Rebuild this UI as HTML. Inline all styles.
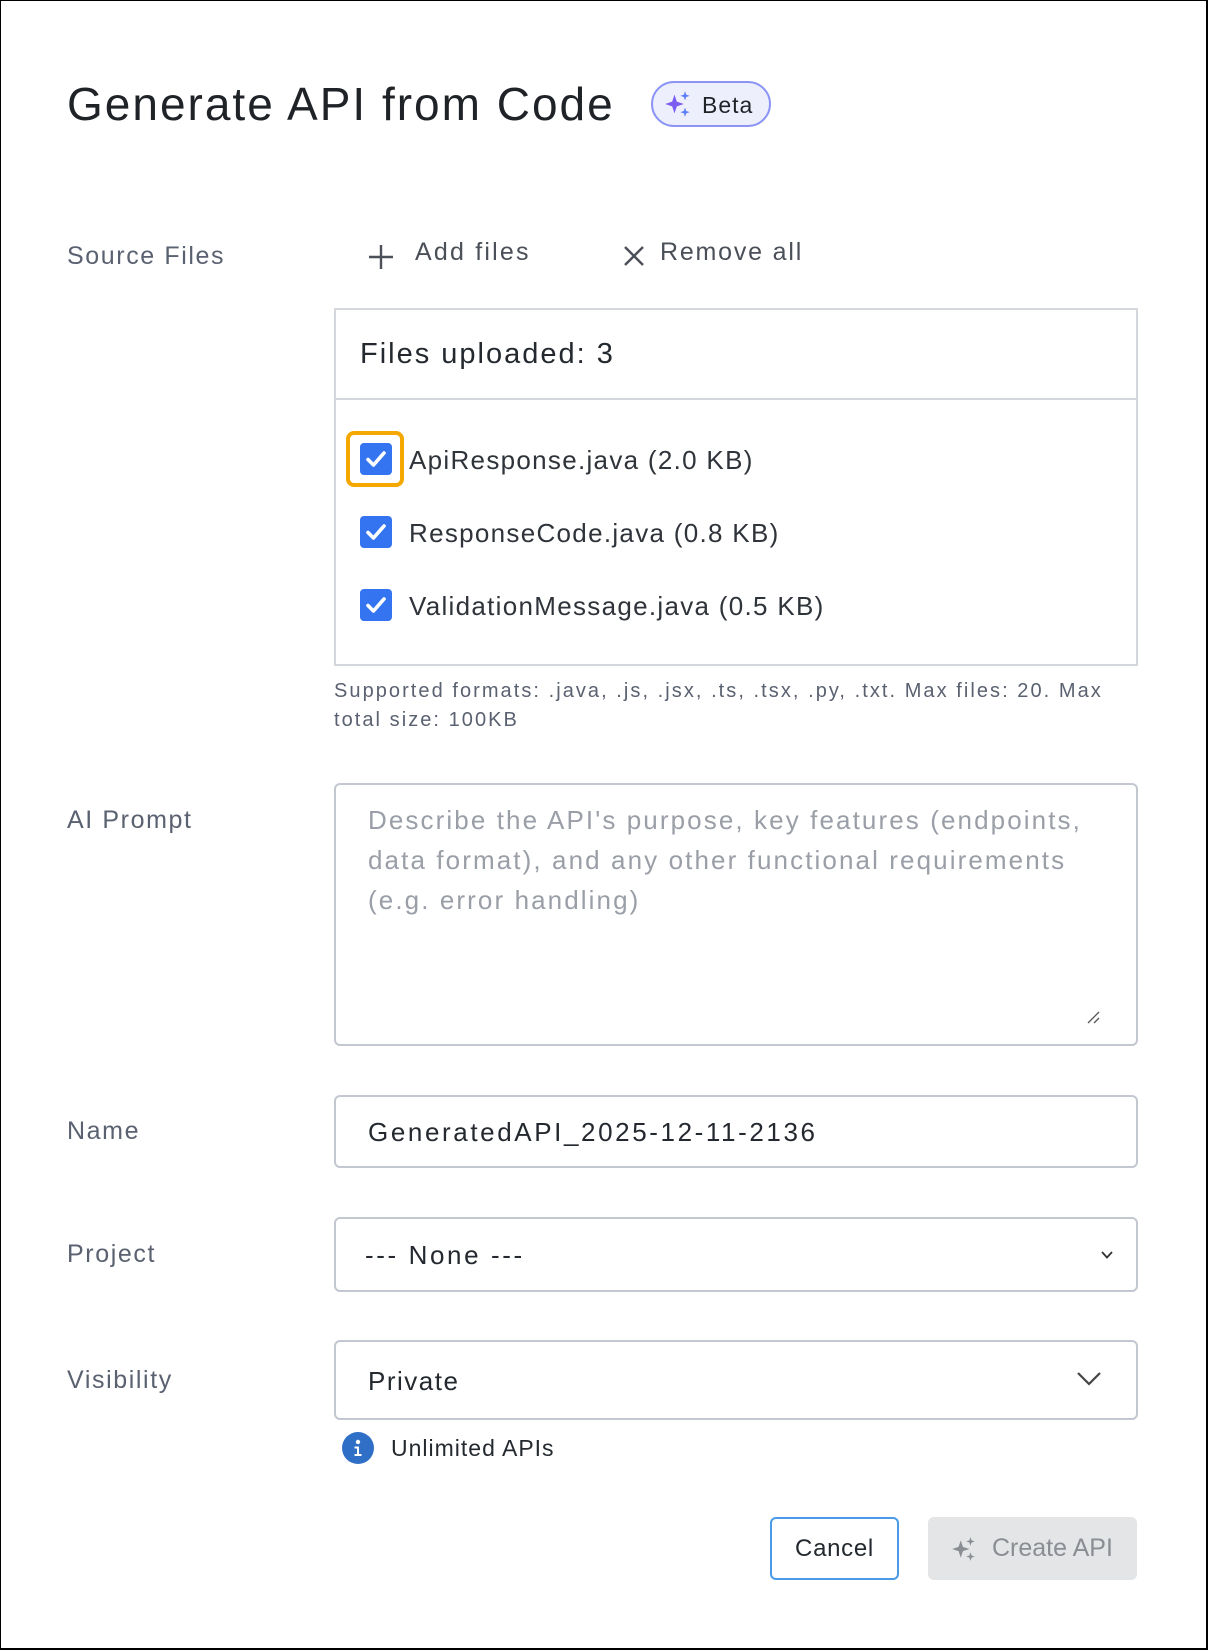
<!DOCTYPE html>
<html><head><meta charset="utf-8"><style>
*{box-sizing:border-box;margin:0;padding:0}
html,body{width:1208px;height:1650px;background:#fff;overflow:hidden}
body{font-family:"Liberation Sans",Arial,sans-serif;color:#24292f;position:relative}
.frame{position:absolute;left:0;top:0;width:1208px;height:1650px;border:1px solid #000;border-bottom:2px solid #000;border-right:2px solid #000}
.a{position:absolute;white-space:nowrap}
.lbl{font-size:25px;color:#5a6170;letter-spacing:1.6px}
.box{position:absolute;border:2px solid #c3c7d0;border-radius:6px;background:#fff}
.cb{position:absolute;width:32px;height:32px;background:#3574f0;border-radius:4px}
.ft{font-size:26px;color:#2f333a;letter-spacing:1.3px}
</style></head><body>
<div class="frame"></div>

<div class="a" style="left:67px;top:77px;font-size:46px;letter-spacing:2px;color:#1f2328">Generate API from Code</div>
<div class="a" style="left:651px;top:81px;width:120px;height:46px;border:2px solid #8c95f5;border-radius:23px;background:#eeeffd;"></div>
<svg class="a" style="left:664px;top:90px" width="28" height="28" viewBox="0 0 24 24"><path d="M9 4 L11 10 L17 12 L11 14 L9 20 L7 14 L1 12 L7 10Z" fill="#7b5cf0"/><path d="M18 1 L19 4 L22 5 L19 6 L18 9 L17 6 L14 5 L17 4Z" fill="#5b7df5"/><path d="M18 15 L19 18 L22 19 L19 20 L18 23 L17 20 L14 19 L17 18Z" fill="#5b7df5"/></svg>
<div class="a" style="left:702px;top:92px;font-size:23px;letter-spacing:1px;color:#1f2328">Beta</div>

<div class="a lbl" style="left:67px;top:242px">Source Files</div>
<svg class="a" style="left:367px;top:243px" width="28" height="28" viewBox="0 0 28 28"><path d="M14 2V26M2 14H26" stroke="#4a4f58" stroke-width="2.4"/></svg>
<div class="a" style="left:415px;top:238px;font-size:25px;letter-spacing:2.2px;color:#4a4f58">Add files</div>
<svg class="a" style="left:623px;top:245px" width="22" height="22" viewBox="0 0 22 22"><path d="M2 2L20 20M20 2L2 20" stroke="#4a4f58" stroke-width="2.4"/></svg>
<div class="a" style="left:660px;top:238px;font-size:25px;letter-spacing:1.8px;color:#4a4f58">Remove all</div>

<div class="a" style="left:334px;top:308px;width:804px;height:358px;border:2px solid #d4d7dc"></div>
<div class="a" style="left:334px;top:398px;width:804px;height:2px;background:#d4d7dc"></div>
<div class="a" style="left:360px;top:338px;font-size:29px;letter-spacing:2px;color:#24292f">Files uploaded: 3</div>

<div class="a" style="left:346px;top:431px;width:58px;height:56px;border:4px solid #f5a800;border-radius:8px"></div>
<div class="cb" style="left:360px;top:443px"></div>
<div class="cb" style="left:360px;top:516px"></div>
<div class="cb" style="left:360px;top:589px"></div>
<svg class="a" style="left:360px;top:443px" width="32" height="32" viewBox="0 0 32 32"><path d="M8 16.5L13.5 22L24 10" stroke="#fff" stroke-width="3.6" fill="none" stroke-linecap="round" stroke-linejoin="round"/></svg>
<svg class="a" style="left:360px;top:516px" width="32" height="32" viewBox="0 0 32 32"><path d="M8 16.5L13.5 22L24 10" stroke="#fff" stroke-width="3.6" fill="none" stroke-linecap="round" stroke-linejoin="round"/></svg>
<svg class="a" style="left:360px;top:589px" width="32" height="32" viewBox="0 0 32 32"><path d="M8 16.5L13.5 22L24 10" stroke="#fff" stroke-width="3.6" fill="none" stroke-linecap="round" stroke-linejoin="round"/></svg>
<div class="a ft" style="left:409px;top:445px">ApiResponse.java (2.0 KB)</div>
<div class="a ft" style="left:409px;top:518px">ResponseCode.java (0.8 KB)</div>
<div class="a ft" style="left:409px;top:591px">ValidationMessage.java (0.5 KB)</div>

<div class="a" style="left:334px;top:677px;font-size:20px;letter-spacing:2.05px;line-height:29px;color:#5a6170">Supported formats: .java, .js, .jsx, .ts, .tsx, .py, .txt. Max files: 20. Max<br>total size: 100KB</div>

<div class="a lbl" style="left:67px;top:806px">AI Prompt</div>
<div class="box" style="left:334px;top:783px;width:804px;height:263px"></div>
<div class="a" style="left:368px;top:800px;font-size:26px;letter-spacing:2.1px;line-height:40px;color:#9a9ea6">Describe the API's purpose, key features (endpoints,<br>data format), and any other functional requirements<br>(e.g. error handling)</div>
<svg class="a" style="left:1086px;top:1010px" width="14" height="14" viewBox="0 0 14 14"><path d="M2 13L13 2M8 13L13 8" stroke="#555" stroke-width="1.3"/></svg>

<div class="a lbl" style="left:67px;top:1117px">Name</div>
<div class="box" style="left:334px;top:1095px;width:804px;height:73px"></div>
<div class="a" style="left:368px;top:1117px;font-size:26px;letter-spacing:2.6px;color:#24292f">GeneratedAPI_2025-12-11-2136</div>

<div class="a lbl" style="left:67px;top:1240px">Project</div>
<div class="box" style="left:334px;top:1217px;width:804px;height:75px"></div>
<div class="a" style="left:365px;top:1240px;font-size:26px;letter-spacing:2.6px;color:#24292f">--- None ---</div>
<svg class="a" style="left:1099px;top:1249px" width="16" height="12" viewBox="0 0 16 12"><path d="M3 3L8 8.5L13 3" stroke="#333" stroke-width="1.8" fill="none"/></svg>

<div class="a lbl" style="left:67px;top:1366px">Visibility</div>
<div class="box" style="left:334px;top:1340px;width:804px;height:80px"></div>
<div class="a" style="left:368px;top:1366px;font-size:26px;letter-spacing:1.5px;color:#24292f">Private</div>
<svg class="a" style="left:1076px;top:1370px" width="26" height="18" viewBox="0 0 26 18"><path d="M2 3L13 14L24 3" stroke="#444" stroke-width="2.2" fill="none"/></svg>

<svg class="a" style="left:342px;top:1432px" width="32" height="32" viewBox="0 0 32 32"><circle cx="16" cy="16" r="16" fill="#2f6fc6"/><circle cx="16" cy="10" r="2.2" fill="#fff"/><path d="M12.5 14.5H17V22H19.5V24H12.5V22H15V16.5H12.5Z" fill="#fff"/></svg>
<div class="a" style="left:391px;top:1435px;font-size:23px;letter-spacing:1px;color:#24292f">Unlimited APIs</div>

<div class="a" style="left:770px;top:1517px;width:129px;height:63px;border:2px solid #4a9ae8;border-radius:6px"></div>
<div class="a" style="left:770px;top:1535px;width:129px;text-align:center;font-size:24px;letter-spacing:0.7px;color:#24292f">Cancel</div>
<div class="a" style="left:928px;top:1517px;width:209px;height:63px;background:#e3e5e6;border-radius:6px"></div>
<svg class="a" style="left:951px;top:1536px" width="26" height="26" viewBox="0 0 24 24"><path d="M9 4 L11 10 L17 12 L11 14 L9 20 L7 14 L1 12 L7 10Z" fill="#8a8e94"/><path d="M18 1 L19 4 L22 5 L19 6 L18 9 L17 6 L14 5 L17 4Z" fill="#8a8e94"/><path d="M18 15 L19 18 L22 19 L19 20 L18 23 L17 20 L14 19 L17 18Z" fill="#8a8e94"/></svg>
<div class="a" style="left:992px;top:1534px;font-size:25px;color:#8a8e94">Create API</div>
</body></html>
